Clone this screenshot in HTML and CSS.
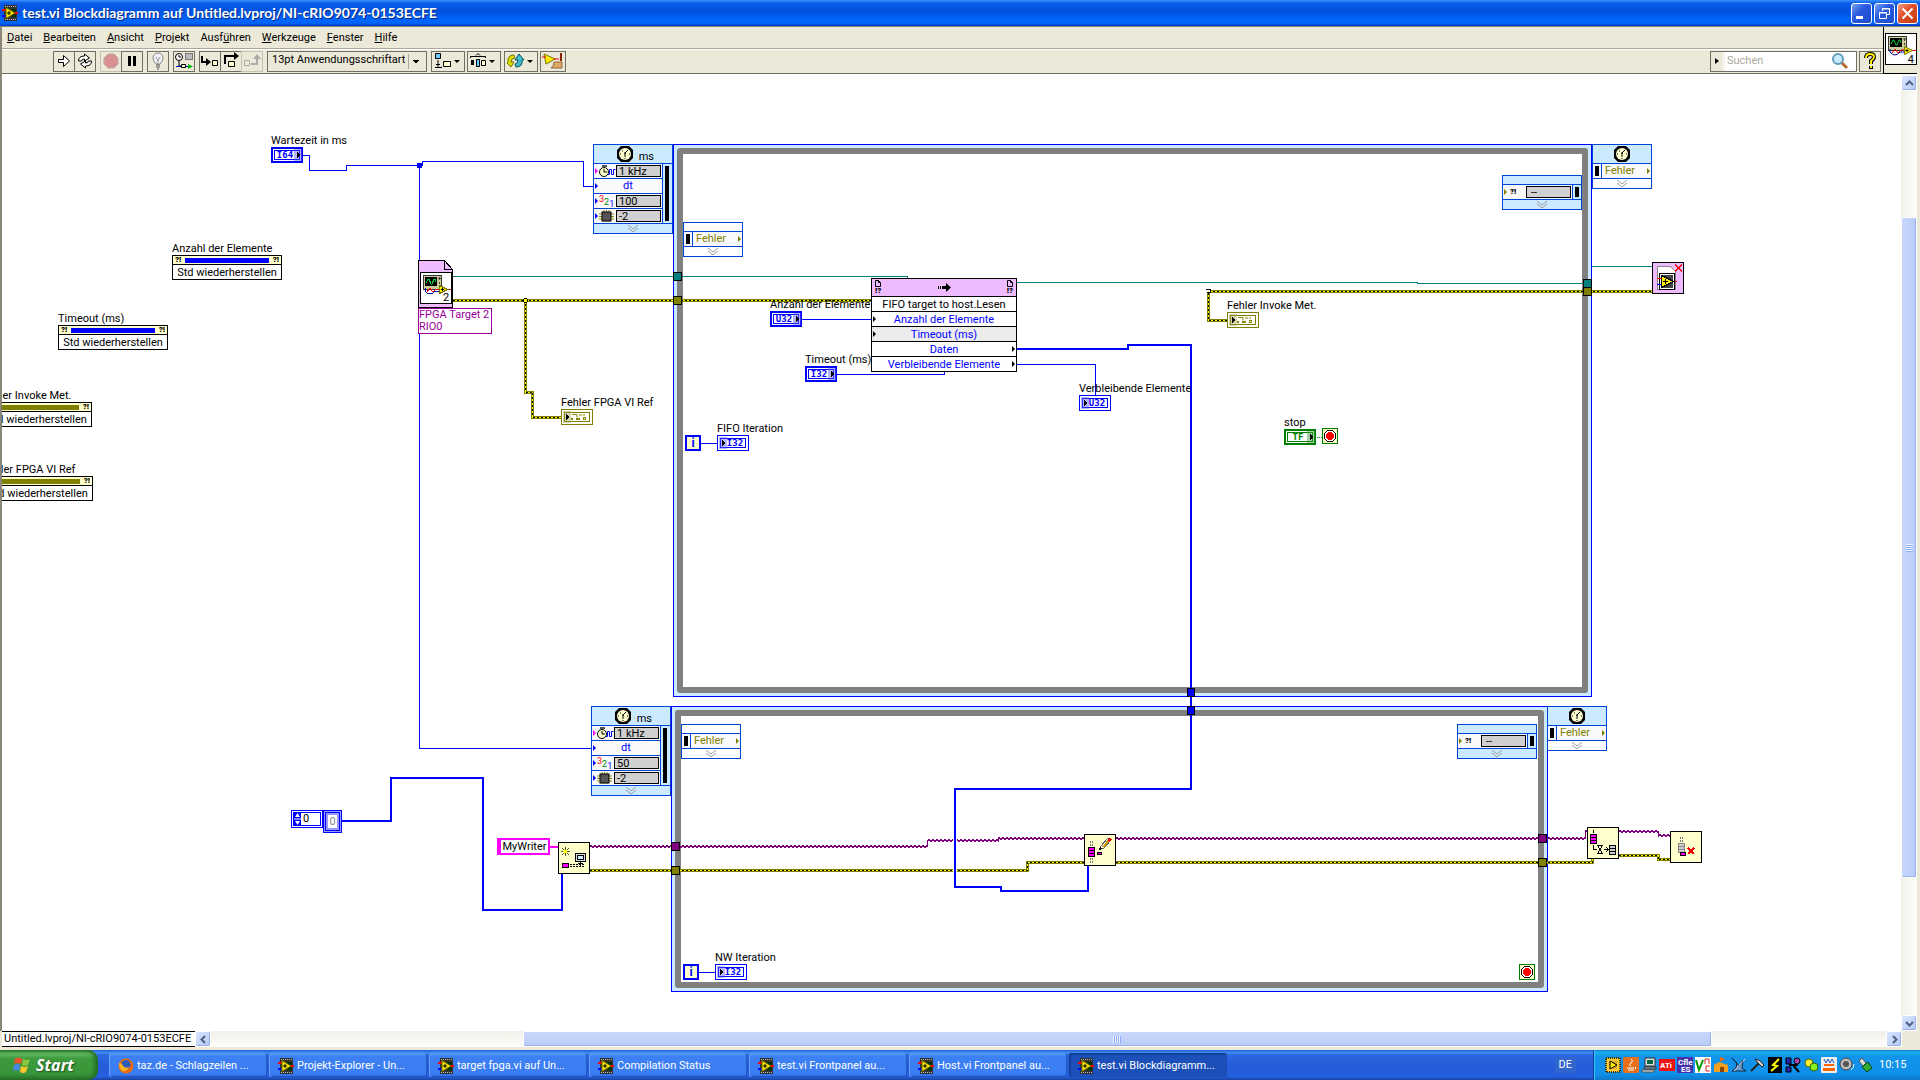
FILE: index.html
```
<!DOCTYPE html>
<html lang="de">

<head>
    <meta charset="UTF-8">
    <meta name="viewport" content="width=device-width, initial-scale=1.0">
    <title>test.vi Blockdiagramm</title>
    <link rel="stylesheet" href="styles.css">
</head>

<body>
    <!-- shared icons -->
    <svg class="defs" width="0" height="0">
        <symbol id="lv" viewBox="0 0 16 16">
            <rect x="2" y="0" width="13" height="16" fill="#333"/>
            <path d="M3 1.5h11M3 14.5h11" stroke="#bbb" stroke-dasharray="1 1"/>
            <rect x="9" y="4" width="5" height="8" fill="#063006"/>
            <path d="M0 5h4" stroke="#f00" stroke-width="2"/>
            <path d="M0 11h4" stroke="#00f" stroke-width="2"/>
            <path d="M12 8h4" stroke="#f00" stroke-width="2"/>
            <path d="M4 2.5l9 5.5-9 5.5z" fill="#fe0" stroke="#660" stroke-width="1"/>
            <path d="M5 8h4M7 6v4" stroke="#000"/>
        </symbol>
        <symbol id="vi" viewBox="0 0 32 32">
            <rect x=".5" y=".5" width="31" height="31" fill="#fff" stroke="#000"/>
            <rect x="3.5" y="3.5" width="18" height="14" fill="#cc9" stroke="#333"/>
            <rect x="5" y="5" width="12" height="9" fill="#000"/>
            <path d="M6 11l2-4h1l2 5h1l2-5h1l1 3" fill="none" stroke="#0c3"/>
            <path d="M19.500 5v3M19.500 10v2M18 6h3" stroke="#444"/>
            <path d="M5 16v3q5 6 10 0h5" fill="none" stroke="#00a"/>
            <path d="M7 20l3-4 3 4 3-3h4M27 17.500h4" fill="none" stroke="#e00"/>
            <path d="M19.500 13.500l8 4-8 4z" fill="#fe0" stroke="#770"/>
            <path d="M20.500 17.500h3M22 16v3" stroke="#000"/>
        </symbol>
        <symbol id="clock" viewBox="0 0 18 16">
            <path d="M5 0h8l4 4v8l-4 4H5l-4-4V4z" fill="#000"/>
            <circle cx="9" cy="8" r="6" fill="#ffffd0"/>
            <path d="M9 11V7l3-3M4 8h1M13 8h1M9 12v1M6 5h1M8 7h2" stroke="#000" fill="none"/>
        </symbol>
        <symbol id="source" viewBox="0 0 17 12">
            <path d="M3 0h5v2H3z" fill="#555"/>
            <circle cx="5" cy="7" r="4.500" fill="#ffc" stroke="#000"/>
            <path d="M5 4v3h3" stroke="#000" fill="none"/>
            <path d="M9 9.500h1.500v-5h2v5h2v-5h2" stroke="#00f" fill="none"/>
        </symbol>
        <symbol id="chip" viewBox="0 0 17 12">
            <path d="M0 4h15M0 6.500h15M0 9h15M5 0v12M7.500 0v12M10 0v12" stroke="#880"/>
            <rect x="3" y="2" width="9" height="9" fill="#555" stroke="#000"/>
        </symbol>
        <symbol id="chev" viewBox="0 0 10 8">
            <path d="M0 0l5 4 5-4M0 3l5 4 5-4" fill="none" stroke="#999"/>
        </symbol>
        <symbol id="error" viewBox="0 0 18 8">
            <path d="M2 1.500h5v3M9 2h3M14 1v2" fill="none" stroke="#880"/>
            <path d="M1 5h2v2H1zM6 5h4v2H6z" fill="#880"/>
            <rect x="13.500" y="4.500" width="2" height="2" fill="none" stroke="#880"/>
        </symbol>
        <symbol id="stopicon" viewBox="0 0 16 16">
            <rect x=".5" y=".5" width="15" height="15" fill="#ffffd0" stroke="#008000"/>
            <path d="M5.500 2.500h5l3 3v5l-3 3h-5l-3-3v-5z" fill="#fff" stroke="#000"/>
            <circle cx="8" cy="8" r="4" fill="#f00"/>
        </symbol>
        <symbol id="doc" viewBox="0 0 6 7">
            <path d="M.5 .5h3l2 2v4h-5zM3.500 .5v2h2" fill="none" stroke="#000"/>
        </symbol>
    </svg>

    <header class="titlebar">
        <svg class="i16"><use href="#lv"/></svg>
        <h1>test.vi Blockdiagramm auf Untitled.lvproj/NI-cRIO9074-0153ECFE</h1>
        <button type="button" class="win-btn" aria-label="Minimieren"><svg viewBox="0 0 19 19"><path d="M4 12h7v3H4z" fill="#fff"/></svg></button>
        <button type="button" class="win-btn" aria-label="Wiederherstellen"><svg viewBox="0 0 19 19"><path d="M7.500 7V4.500h7v6H12M7 5h8M4.500 8.500h7v6h-7zM4 9h8" fill="none" stroke="#fff"/></svg></button>
        <button type="button" class="win-btn close" aria-label="Schließen"><svg viewBox="0 0 19 19"><path d="M4.500 4.500l10 10M14.500 4.500l-10 10" stroke="#fff" stroke-width="2"/></svg></button>
    </header>

    <div class="top">
        <div class="bars">
            <nav class="menubar">
                <a href="#"><u>D</u>atei</a>
                <a href="#"><u>B</u>earbeiten</a>
                <a href="#"><u>A</u>nsicht</a>
                <a href="#"><u>P</u>rojekt</a>
                <a href="#">Ausf<u>ü</u>hren</a>
                <a href="#"><u>W</u>erkzeuge</a>
                <a href="#"><u>F</u>enster</a>
                <a href="#"><u>H</u>ilfe</a>
            </nav>
            <div class="toolbar">
                <div class="group">
                    <button type="button" class="tool" aria-label="Ausführen"><svg viewBox="0 0 20 18"><path d="M4.500 7.500h5v-4l6 5.500-6 5.500v-4h-5z" fill="#fff" stroke="#000"/></svg></button>
                    <button type="button" class="tool" aria-label="Wiederholt ausführen"><svg viewBox="0 0 20 18"><path d="M3.500 9q0-5 6-5V2l5 4-5 3V7q-3 0-3 2zM16.500 9q0 5-6 5v2l-5-4 5-3v2q3 0 3-2z" fill="#fff" stroke="#000"/></svg></button>
                </div>
                <div class="group">
                    <button type="button" class="tool off" aria-label="Abbrechen"><svg viewBox="0 0 20 18"><path d="M7 2h6l4 4v6l-4 4H7l-4-4V6z" fill="#d99090" stroke="#b9a9a0"/></svg></button>
                    <button type="button" class="tool" aria-label="Pause"><svg viewBox="0 0 20 18"><path d="M6 4h3v10H6zM11 4h3v10h-3z"/></svg></button>
                </div>
                <button type="button" class="tool" aria-label="Highlight-Funktion"><svg viewBox="0 0 20 18"><path d="M8 12q-3-3-3-6a5 5 0 0 1 10 0q0 3-3 6z" fill="#eef2f5" stroke="#8a8a8a"/><path d="M8 5l2 4 2-4M10 9v3" fill="none" stroke="#999"/><path d="M8 13h4M8 15h4M9 17h2" stroke="#555"/></svg></button>
                <button type="button" class="tool" aria-label="Werte beibehalten"><svg viewBox="0 0 20 18"><circle cx="5" cy="5" r="3.500" fill="#fff" stroke="#000"/><path d="M5 3v2h2M5 9v5h3" fill="none" stroke="#000"/><rect x="11.500" y="1.500" width="7" height="6" fill="#bbb" stroke="#777"/><path d="M2 14.500h15" stroke="#00c"/><path d="M14 12l5 2.500-5 2.500z" fill="#0b0"/><path d="M7.500 12.500h4v3h-4z" fill="#ffc" stroke="#000"/></svg></button>
                <div class="group">
                    <button type="button" class="tool" aria-label="Hineinspringen"><svg viewBox="0 0 20 18"><path d="M2 4v6h6" fill="none" stroke="#000" stroke-width="2"/><path d="M6 6l5 4-5 4z"/><path d="M12.500 8.500h5v5h-5z" fill="#ffc" stroke="#000"/></svg></button>
                    <button type="button" class="tool" aria-label="Überspringen"><svg viewBox="0 0 20 18"><path d="M4 12V4h11" fill="none" stroke="#000" stroke-width="2"/><path d="M13 0l5 4-5 4z"/><path d="M7.500 9.500h6v5h-6z" fill="#ffc" stroke="#000"/></svg></button>
                    <button type="button" class="tool off" aria-label="Herausspringen"><svg viewBox="0 0 20 18"><path d="M9 12h6V6" fill="none" stroke="#aaa" stroke-width="2"/><path d="M11 7l4-5 4 5z" fill="#aaa"/><path d="M2.500 8.500h5v5h-5z" fill="#eec" stroke="#aaa"/></svg></button>
                </div>
                <select class="font-select" aria-label="Schriftart">
                    <option>13pt Anwendungsschriftart</option>
                </select>
                <button type="button" class="tool wide" aria-label="Ausrichten"><svg viewBox="0 0 32 18"><path d="M3.500 1.500h5v5h-5z" fill="#6cf" stroke="#000"/><path d="M6 8v7M4 12.500h4M3 15.500h7" stroke="#000"/><path d="M11.500 9.500h7v5h-7z" fill="#ffc" stroke="#000"/><path d="M22 8h6l-3 3z"/></svg></button>
                <button type="button" class="tool wide" aria-label="Verteilen"><svg viewBox="0 0 32 18"><path d="M2.500 6V4.500h15V6M8 3.500l2-2 2 2" fill="none" stroke="#000"/><path d="M3 8h3v5H3z"/><path d="M8.500 7.500h3v7h-3z" fill="#6cf" stroke="#000"/><path d="M13.500 8.500h4v5h-4z" fill="#ffc" stroke="#000"/><path d="M21 8h6l-3 3z"/></svg></button>
                <button type="button" class="tool wide gap" aria-label="Neu ordnen"><svg viewBox="0 0 32 18"><path d="M9 3q-7 0-6 7l-1 1 4 4 3-5H6q0-4 4-4z" fill="#dd0" stroke="#770"/><path d="M11 15q7 0 6-7h2l-5-6-4 6h3q0 4-3 4z" fill="#4bc" stroke="#056"/><path d="M22 8h6l-3 3z"/></svg></button>
                <button type="button" class="tool mid" aria-label="Diagramm aufräumen"><svg viewBox="0 0 24 18"><path d="M3 2l11 5-9 5z" fill="#fe0" stroke="#770"/><path d="M1 5h4M13 7h5" stroke="#e00"/><path d="M20 1v8" stroke="#820" stroke-width="2"/><path d="M13 10h8v6H10q3-2 3-6z" fill="#da6" stroke="#964"/></svg></button>
                <div class="search">
                    <span class="search-drop"></span>
                    <input type="text" placeholder="Suchen" aria-label="Suchen">
                    <svg viewBox="0 0 18 18"><path d="M10 10l6 6" stroke="#b86a30" stroke-width="3"/><circle cx="7" cy="7" r="5" fill="#c8ecff" stroke="#69b" stroke-width="2"/></svg>
                </div>
                <button type="button" class="tool help" aria-label="Kontexthilfe"><svg viewBox="0 0 20 18"><path d="M6 6q0-4 4-4t4 3q0 2-3 4v3M11 14v3" fill="none" stroke="#000" stroke-width="4"/><path d="M6 6q0-4 4-4t4 3q0 2-3 4v3M11 14v2" fill="none" stroke="#fe0" stroke-width="2"/></svg></button>
            </div>
        </div>
        <div class="vi-pane">
            <svg class="i32"><use href="#vi"/></svg>
            <span class="vi-num">4</span>
        </div>
    </div>

    <main class="work">
        <div class="canvas">
            <div class="loop loop-fifo"></div>
            <div class="loop loop-nw"></div>

            <!-- wires, in window coordinates -->
            <svg class="wires" viewBox="2 74 1900 957" width="1900" height="957">
                <g class="w-int">
                    <path d="M303 155.500h6.500v15h37v-5h73M419.500 165.500h3v-4h161v25h10M419.500 165v583.500h172"/>
                    <path d="M802 319.500h69M837 374.500h107.500v-3M1017 364.500h78.500v31M701 443.500h16M699 972.500h16"/>
                </g>
                <circle cx="419.500" cy="165.500" r="3" fill="#00f"/>
                <g class="w-ref">
                    <path d="M453 276.500h454.500v2M1017 282.500h400.500v1H1583M1592 266.500h60"/>
                </g>
                <g class="w-str">
                    <path id="net" d="M590 846.500h337v-6h71v-2h86M1116 838.500h469v-7h2M1619 831.500h39v4h12"/>
                    <use class="w-up" href="#net" y="-1"/>
                    <use class="w-down" href="#net" y="1"/>
                </g>
                <path d="M550 846.500h8" stroke="#f0f" stroke-width="2" fill="none"/>
                <path class="e1" id="errs" d="M453 300.500h418M525.500 300v92h7v25h29M1227 320.500h-18.500v-29H1652M590 870.500h437.500v-8h57M1116 862.500h476v-4M1619 855.500h39v4h12"/>
                <path class="e2" d="M453 300.500h418M525.500 300v92h7v25h29M1227 320.500h-18.500v-29H1652M590 870.500h437.500v-8h57M1116 862.500h476v-4M1619 855.500h39v4h12"/>
                <path class="e3" d="M453 300.500h418M525.500 300v92h7v25h29M1227 320.500h-18.500v-29H1652M590 870.500h437.500v-8h57M1116 862.500h476v-4M1619 855.500h39v4h12"/>
                <circle cx="525.500" cy="300.500" r="2" fill="#ff0" stroke="#000"/>
                <path d="M1206 289.500h4.500v3h-4" fill="#fff" stroke="#000"/>
                <path d="M1317 437.500h5" stroke="#008000" stroke-dasharray="1 1"/>
                <!-- gap where the array wire crosses -->
                <path d="M955 835v40" stroke="#fff" stroke-width="4"/>
                <g class="w-arr">
                    <path d="M1017 349h111v-4h63v444H955v98h46v4h87v-25"/>
                    <path d="M342 821h49v-43h92v132h79v-37"/>
                </g>
                <!-- tunnels -->
                <g stroke="#000">
                    <rect x="673.500" y="272.500" width="8" height="8" fill="#008080"/>
                    <rect x="673.500" y="296.500" width="8" height="8" fill="#808000"/>
                    <rect x="1583.500" y="279.500" width="8" height="8" fill="#008080"/>
                    <rect x="1583.500" y="287.500" width="8" height="8" fill="#808000"/>
                    <rect x="671.500" y="842.500" width="8" height="8" fill="#800080"/>
                    <rect x="671.500" y="866.500" width="8" height="8" fill="#808000"/>
                    <rect x="1538.500" y="834.500" width="8" height="8" fill="#800080"/>
                    <rect x="1538.500" y="858.500" width="8" height="8" fill="#808000"/>
                    <rect x="1187.500" y="688.500" width="7" height="8" fill="#00f"/>
                    <rect x="1187.500" y="706.500" width="7" height="8" fill="#00f"/>
                </g>
                <!-- open FPGA reference -->
                <path d="M418.500 260.500h26l8 9v38h-34z" fill="#eebbff" stroke="#000"/>
                <path d="M444.500 260.500v9h8" fill="none" stroke="#000"/>
                <use href="#vi" x="420" y="272" width="32" height="32"/>
                <!-- close FPGA reference -->
                <g transform="translate(1652 262)">
                    <rect x=".5" y=".5" width="31" height="31" fill="#eebbff" stroke="#000"/>
                    <path d="M5.500 4.500h13l5 5v18h-18z" fill="#fff" stroke="#888"/>
                    <rect x="7.500" y="11.500" width="15" height="16" fill="#fff" stroke="#000"/>
                    <rect x="9" y="13" width="12" height="13" fill="#444"/>
                    <path d="M5 16.500h5M22 19.500h3" stroke="#f00"/><path d="M5 22.500h5" stroke="#00f"/>
                    <path d="M9.500 13.500l12 6-12 6z" fill="#fe0" stroke="#000"/>
                    <path d="M11 19.500h5M13.500 17v5" stroke="#000"/>
                    <path d="M23 3l7 6M30 3l-7 6" stroke="#f00" stroke-width="1.500"/>
                </g>
                <!-- create writer -->
                <g transform="translate(558 842)">
                    <rect x=".5" y=".5" width="31" height="31" fill="#ffffcc" stroke="#000"/>
                    <path d="M3 9.500h9M7.500 5v9M4 6l7 7M11 6l-7 7" stroke="#550"/><circle cx="7.500" cy="9.500" r="2" fill="#ff0"/>
                    <rect x="17.500" y="11.500" width="10" height="8" fill="#ddd" stroke="#000"/>
                    <rect x="19.500" y="13.500" width="6" height="4" fill="#cef" stroke="#000"/>
                    <path d="M22.500 20v4M20 21.500h5" stroke="#000"/>
                    <path d="M12 22.500h15M12 24.500h15" stroke="#000" stroke-dasharray="2 1"/>
                    <rect x="4.500" y="21.500" width="6" height="4" fill="#f0f" stroke="#000"/>
                </g>
                <!-- write -->
                <g transform="translate(1084 834)">
                    <rect x=".5" y=".5" width="31" height="31" fill="#ffffcc" stroke="#000"/>
                    <path d="M6.500 7v5M8.500 7v5M6.500 24v5M8.500 24v5" stroke="#777" stroke-dasharray="2 1"/>
                    <path d="M4.500 13.500h6v9h-6zM4.500 16.500h6M4.500 19.500h6M13.500 18.500h4v2h-4z" fill="#f0f" stroke="#000"/>
                    <path d="M16 15l1-3 7-8 3 2-7 8z" fill="#fff" stroke="#666"/>
                    <path d="M19 13l7-8" stroke="#c90" stroke-width="2"/>
                    <path d="M15 16l2-2" stroke="#000" stroke-width="2"/>
                    <path d="M25 5l2 2" stroke="#e00" stroke-width="3"/>
                </g>
                <!-- flush -->
                <g transform="translate(1587 827)">
                    <rect x=".5" y=".5" width="31" height="31" fill="#ffffcc" stroke="#000"/>
                    <path d="M6.500 3v3M6.500 18v4h3" fill="none" stroke="#000"/>
                    <path d="M3.500 7.500h6v9h-6zM3.500 10.500h6M3.500 13.500h6" fill="#f0f" stroke="#000"/>
                    <path d="M10 18.500h6M10 26.500h6M11 19l4 7M15 19l-4 7M17 22.500h4M19 20l2 2.500-2 2.500" fill="none" stroke="#000"/>
                    <path d="M22.500 18.500h6v9h-6zM22.500 21.500h6M22.500 24.500h6" fill="#ccc" stroke="#000"/>
                </g>
                <!-- destroy -->
                <g transform="translate(1670 831)">
                    <rect x=".5" y=".5" width="31" height="31" fill="#ffffcc" stroke="#000"/>
                    <path d="M10.500 6v5M12.500 6v5" stroke="#777" stroke-dasharray="2 1"/>
                    <path d="M8.500 12.500h6v9h-6zM8.500 15.500h6M8.500 18.500h6" fill="#ccc" stroke="#888"/>
                    <rect x="10.500" y="21.500" width="5" height="3" fill="#f0f" stroke="#000"/>
                    <path d="M18 17l6 6M24 17l-6 6" stroke="#e00" stroke-width="2"/>
                </g>
                <use href="#stopicon" x="1322" y="428" width="16" height="16"/>
                <use href="#stopicon" x="1519" y="964" width="16" height="16"/>
            </svg>

            <!-- property nodes -->
            <div class="node prop-anzahl"><span>Anzahl der Elemente</span>
                <div class="prop"><div class="prop-head"><b>?!</b><i></i><b>?!</b></div><p>Std wiederherstellen</p></div></div>
            <div class="node prop-timeout"><span>Timeout (ms)</span>
                <div class="prop"><div class="prop-head"><b>?!</b><i></i><b>?!</b></div><p>Std wiederherstellen</p></div></div>
            <div class="node prop-invoke"><span>Fehler Invoke Met.</span>
                <div class="prop olive"><div class="prop-head"><b>?!</b><i></i><b>?!</b></div><p>Std wiederherstellen</p></div></div>
            <div class="node prop-fpga"><span>Fehler FPGA VI Ref</span>
                <div class="prop olive"><div class="prop-head"><b>?!</b><i></i><b>?!</b></div><p>Std wiederherstellen</p></div></div>

            <!-- terminals -->
            <div class="node t-wartezeit"><span>Wartezeit in ms</span><div class="term ctl"><b>I64</b></div></div>
            <div class="node t-anzahl"><span>Anzahl der Elemente</span><div class="term ctl"><b>U32</b></div></div>
            <div class="node t-timeout"><span>Timeout (ms)</span><div class="term ctl"><b>I32</b></div></div>
            <div class="node t-rest"><span>Verbleibende Elemente</span><div class="term"><b>U32</b></div></div>
            <div class="node t-fifo"><span>FIFO Iteration</span><div class="term"><b>I32</b></div></div>
            <div class="node t-nw"><span>NW Iteration</span><div class="term"><b>I32</b></div></div>
            <div class="node t-stop"><span>stop</span><div class="term ctl bool"><b>TF</b></div></div>
            <div class="node t-invoke"><span>Fehler Invoke Met.</span><div class="term err"><b><svg viewBox="0 0 18 8"><use href="#error"/></svg></b></div></div>
            <div class="node t-fpga"><span>Fehler FPGA VI Ref</span><div class="term err"><b><svg viewBox="0 0 18 8"><use href="#error"/></svg></b></div></div>
            <div class="iter iter-fifo">i</div>
            <div class="iter iter-nw">i</div>

            <div class="fpga-num">2</div>
            <div class="fpga-label">FPGA Target 2<br>RIO0</div>

            <!-- constants -->
            <div class="string-const">MyWriter</div>
            <div class="array-const">
                <div class="array-index"><svg viewBox="0 0 7 14"><path d="M0 0h7v14H0z" fill="#00f"/><path d="M1 5l2.500-4L6 5zM1 9l2.500 4L6 9zM0 6.500h7v1H0z" fill="#fff"/></svg>0</div>
                <div class="array-elem"><span>0</span></div>
            </div>

            <!-- invoke node -->
            <div class="invoke">
                <div class="invoke-head">
                    <div><svg class="doc"><use href="#doc"/></svg><b>!?</b></div>
                    <svg class="arrow" viewBox="0 0 13 9"><path d="M0 3h1v3H0zM2 3h1v3H2zM4 3h4V0l5 4.500L8 9V6H4z"/></svg>
                    <div><svg class="doc"><use href="#doc"/></svg><b>!?</b></div>
                </div>
                <div class="row name">FIFO target to host.Lesen</div>
                <div class="row in">Anzahl der Elemente</div>
                <div class="row in opt">Timeout (ms)</div>
                <div class="row out">Daten</div>
                <div class="row out">Verbleibende Elemente</div>
            </div>

            <!-- timed loop input nodes -->
            <div class="timed timed-fifo">
                <div class="timed-head"><svg class="clock"><use href="#clock"/></svg><span>ms</span></div>
                <div class="timed-body">
                    <div class="timed-rows">
                        <div class="trow src"><svg><use href="#source"/></svg><span class="val">1 kHz</span></div>
                        <div class="trow dt">dt</div>
                        <div class="trow"><em><i>3</i><i>2</i><i>1</i></em><span class="val">100</span></div>
                        <div class="trow"><svg><use href="#chip"/></svg><span class="val">-2</span></div>
                    </div>
                    <div class="bar"></div>
                </div>
                <div class="foot"><svg><use href="#chev"/></svg></div>
            </div>
            <div class="timed timed-nw">
                <div class="timed-head"><svg class="clock"><use href="#clock"/></svg><span>ms</span></div>
                <div class="timed-body">
                    <div class="timed-rows">
                        <div class="trow src"><svg><use href="#source"/></svg><span class="val">1 kHz</span></div>
                        <div class="trow dt">dt</div>
                        <div class="trow"><em><i>3</i><i>2</i><i>1</i></em><span class="val">50</span></div>
                        <div class="trow"><svg><use href="#chip"/></svg><span class="val">-2</span></div>
                    </div>
                    <div class="bar"></div>
                </div>
                <div class="foot"><svg><use href="#chev"/></svg></div>
            </div>

            <!-- Fehler nodes -->
            <div class="fehler f-left-fifo"><div class="f-head"></div><div class="f-row"><i></i><span>Fehler</span></div><div class="foot"><svg><use href="#chev"/></svg></div></div>
            <div class="fehler f-left-nw"><div class="f-head"></div><div class="f-row"><i></i><span>Fehler</span></div><div class="foot"><svg><use href="#chev"/></svg></div></div>
            <div class="fehler big f-out-fifo"><div class="f-head"><svg class="clock"><use href="#clock"/></svg></div><div class="f-row"><i></i><span>Fehler</span></div><div class="foot"><svg><use href="#chev"/></svg></div></div>
            <div class="fehler big f-out-nw"><div class="f-head"><svg class="clock"><use href="#clock"/></svg></div><div class="f-row"><i></i><span>Fehler</span></div><div class="foot"><svg><use href="#chev"/></svg></div></div>
            <div class="fehler next n-fifo"><div class="f-head"></div><div class="f-row"><b>?!</b><span class="val">--</span><i></i></div><div class="foot"><svg><use href="#chev"/></svg></div></div>
            <div class="fehler next n-nw"><div class="f-head"></div><div class="f-row"><b>?!</b><span class="val">--</span><i></i></div><div class="foot"><svg><use href="#chev"/></svg></div></div>
        </div>
        <div class="vscroll">
            <button type="button" class="sb-btn" aria-label="Nach oben"><svg viewBox="0 0 9 9"><path d="M1 6l3.500-3.500L8 6" fill="none" stroke="#4d6185" stroke-width="2"/></svg></button>
            <div class="v-before"></div>
            <div class="v-thumb"></div>
            <div class="v-after"></div>
            <button type="button" class="sb-btn" aria-label="Nach unten"><svg viewBox="0 0 9 9"><path d="M1 3l3.500 3.500L8 3" fill="none" stroke="#4d6185" stroke-width="2"/></svg></button>
        </div>
    </main>

    <div class="bottom">
        <div class="path">Untitled.lvproj/NI-cRIO9074-0153ECFE</div>
        <div class="hscroll">
            <button type="button" class="sb-btn" aria-label="Nach links"><svg viewBox="0 0 9 9"><path d="M6 1L2.500 4.500 6 8" fill="none" stroke="#4d6185" stroke-width="2"/></svg></button>
            <div class="h-before"></div>
            <div class="h-thumb"></div>
            <div class="h-after"></div>
            <button type="button" class="sb-btn" aria-label="Nach rechts"><svg viewBox="0 0 9 9"><path d="M3 1l3.500 3.500L3 8" fill="none" stroke="#4d6185" stroke-width="2"/></svg></button>
        </div>
    </div>

    <footer class="taskbar">
        <button type="button" class="start">
            <svg viewBox="0 0 20 20"><path d="M3 4q4-3 7 0L9 9Q5 7 2 9z" fill="#f0522a"/><path d="M11 4q4 2 7 0l-2 6q-3 2-6 0z" fill="#8cc63e"/><path d="M2 10q3-2 6 0l-1 6q-3-2-6 0z" fill="#4a86e8"/><path d="M9 11q4 2 7 0l-2 6q-3 2-6 0z" fill="#fbc52b"/></svg>
            Start
        </button>
        <div class="tasks">
            <button type="button" class="task"><svg class="i16" viewBox="0 0 16 16"><circle cx="8" cy="8" r="7.500" fill="#e66a10"/><circle cx="8" cy="6.500" r="4.500" fill="#2a5cb8"/><path d="M1 5q3 0 4 3 3 3 6 1-2 5-7 4-3-3-3-8z" fill="#ffb020"/></svg>taz.de - Schlagzeilen ...</button>
            <button type="button" class="task"><svg class="i16"><use href="#lv"/></svg>Projekt-Explorer - Un...</button>
            <button type="button" class="task"><svg class="i16"><use href="#lv"/></svg>target fpga.vi auf Un...</button>
            <button type="button" class="task"><svg class="i16"><use href="#lv"/></svg>Compilation Status</button>
            <button type="button" class="task"><svg class="i16"><use href="#lv"/></svg>test.vi Frontpanel au...</button>
            <button type="button" class="task"><svg class="i16"><use href="#lv"/></svg>Host.vi Frontpanel au...</button>
            <button type="button" class="task active"><svg class="i16"><use href="#lv"/></svg>test.vi Blockdiagramm...</button>
        </div>
        <span class="lang">DE</span>
        <div class="tray">
            <svg viewBox="0 0 16 16"><rect x="1" y="1" width="14" height="14" fill="#fc3" stroke="#430" stroke-width="2" stroke-dasharray="1 1"/><path d="M4 4h8v8H4z" fill="#da2"/><path d="M5 4l7 4-7 4z" fill="#fe0" stroke="#000"/></svg>
            <svg viewBox="0 0 16 16"><rect width="16" height="16" rx="2" fill="#e8701a"/><path d="M8 2q3 2 0 4t0 3M4 11h7M5 13h6M12 10q2 1 0 2" fill="none" stroke="#fff"/></svg>
            <svg viewBox="0 0 16 16"><path d="M4 1h10v8H4z" fill="#ddd" stroke="#333"/><path d="M6 3h6v4H6z" fill="#064"/><path d="M3 10h12v2H3z" fill="#aaa" stroke="#333"/><path d="M1 13h12v2H1z" fill="#eee" stroke="#555"/></svg>
            <svg viewBox="0 0 16 16"><rect y="2" width="16" height="12" fill="#e11"/><text x="1" y="11">ATi</text></svg>
            <svg viewBox="0 0 16 16"><rect width="16" height="16" fill="#43a"/><text x="1" y="8">Cfle</text><text x="4" y="15">ES</text></svg>
            <svg viewBox="0 0 16 16"><rect width="16" height="16" fill="#fff"/><path d="M1 3l3 10 4-10" fill="none" stroke="#090" stroke-width="2"/><path d="M10 7V2h4v5M15 9h-4v5h4" fill="none" stroke="#d22"/></svg>
            <svg viewBox="0 0 16 16"><path d="M1 15V8l5-3 9 3v7z" fill="#f3a020"/><path d="M7 5V0l5 2-4 2" fill="#f60"/><path d="M7 10h4v5H7z" fill="#840"/></svg>
            <svg viewBox="0 0 16 16"><path d="M1 1l5 5-1 5-4 3h14l-4-3 1-8-4 6z" fill="#69c" stroke="#124"/><path d="M3 14L14 2" stroke="#ddd"/></svg>
            <svg viewBox="0 0 16 16"><path d="M2 14l8-8" stroke="#222" stroke-width="2"/><path d="M6 2q5 0 9 6l-2 2-5-5z" fill="#ccc" stroke="#222"/></svg>
            <svg viewBox="0 0 16 16"><rect x="1" width="14" height="16" fill="#000"/><path d="M12 2L6 8l4 1-6 5" fill="none" stroke="#ff0" stroke-width="2"/></svg>
            <svg viewBox="0 0 16 16"><path d="M1 1h5v6H1zM1 10h5v5H1z" fill="#22a" stroke="#000"/><circle cx="12" cy="4" r="3" fill="#a4a" stroke="#000"/><path d="M4 8h9M8 8l6 7" stroke="#000" stroke-width="2"/></svg>
            <svg viewBox="0 0 16 16"><circle cx="6" cy="6" r="4" fill="#fe3" stroke="#560"/><circle cx="11" cy="10" r="4" fill="#8e2" stroke="#360"/></svg>
            <svg viewBox="0 0 16 16"><rect width="16" height="16" rx="1" fill="#eee"/><path d="M3 2l2 4 2-4 2 4 2-4 2 4" fill="none" stroke="#25b"/><path d="M3 8h10" stroke="#f60" stroke-width="2"/><path d="M2 11h12v3H2z" fill="#f60"/></svg>
            <svg viewBox="0 0 16 16"><circle cx="7" cy="7" r="6" fill="#bbb" stroke="#444"/><circle cx="7" cy="7" r="3" fill="#555"/><path d="M12 13q3-2 3-6" fill="none" stroke="#eee"/></svg>
            <svg viewBox="0 0 16 16"><path d="M2 4l3-3 4 5-3 3z" fill="#ddd" stroke="#555"/><path d="M5 10l6-5 4 6-5 4z" fill="#3a3" stroke="#041"/></svg>
            <time>10:15</time>
        </div>
    </footer>
</body>

</html>
```
FILE: styles.css
```
*,
*::before,
*::after {
    margin: 0;
    padding: 0;
    box-sizing: border-box;
}

body {
    display: flex;
    flex-direction: column;
    height: 100vh;
    overflow: hidden;
    background-color: #ece9d8;
    color: #000;
    font-family: Roboto, "Liberation Sans", sans-serif;
    font-size: 11px;
    line-height: 14px;
}

button,
input,
select {
    font: inherit;
    color: inherit;
}

button {
    display: flex;
    align-items: center;
    justify-content: center;
    border: none;
    background: none;
}

i,
em {
    font-style: normal;
}

.defs {
    position: absolute;
}

.i16 {
    width: 16px;
    height: 16px;
    flex: none;
}

.i32 {
    width: 32px;
    height: 32px;
}

/* title bar */
.titlebar {
    display: flex;
    align-items: center;
    gap: 2px;
    height: 26px;
    padding: 0 2px;
    background: linear-gradient(#3a93ff, #0a5be8 12%, #0053e0 45%, #0066ff 80%, #0062f5 90%, #0038c0);
}

.titlebar h1 {
    flex: 1;
    padding-left: 2px;
    color: #fff;
    font-family: Lato, sans-serif;
    font-size: 14px;
    font-weight: 700;
    text-shadow: 1px 1px #0a2a80;
}

.win-btn {
    width: 21px;
    height: 21px;
    border: 1px solid #fff;
    border-radius: 3px;
    background: linear-gradient(135deg, #7ba2f0, #2a5be0 40%, #1c4bc8);
}

.win-btn svg {
    width: 19px;
    height: 19px;
}

.win-btn.close {
    background: linear-gradient(135deg, #f0a088, #e0512c 40%, #c03c14);
}

/* menu and tool bars */
.top {
    display: flex;
    height: 48px;
    padding-right: 3px;
    border-top: 1px solid #8a8778;
    border-left: 2px solid #8a8778;
}

.bars {
    flex: 1;
    border-bottom: 1px solid #716f64;
}

.menubar {
    display: flex;
    align-items: center;
    gap: 11px;
    height: 22px;
    padding-left: 5px;
    border-bottom: 1px solid #aca899;
}

.menubar a {
    color: #000;
    text-decoration: none;
}

.toolbar {
    display: flex;
    align-items: center;
    gap: 4px;
    height: 24px;
    padding: 0 2px 1px 51px;
    border-top: 1px solid #fff;
}

.group {
    display: flex;
}

.tool {
    width: 22px;
    height: 21px;
    border: 1px solid #716f64;
}

.group .tool + .tool {
    margin-left: -1px;
}

.tool svg {
    width: 20px;
    height: 18px;
}

.tool.off {
    border-color: #c5c2b2;
}

.tool.wide {
    width: 34px;
    margin-right: -2px;
}

.tool.wide svg {
    width: 32px;
}

.tool.gap {
    margin-left: 1px;
}

.tool.mid {
    width: 26px;
}

.tool.mid svg {
    width: 24px;
}

.font-select {
    width: 160px;
    height: 21px;
    padding: 0 0 2px 4px;
    border: 1px solid #716f64;
    border-radius: 0;
    appearance: none;
    /* drop arrow in two halves, then the divider */
    background: linear-gradient(to bottom left, #000 50%, transparent 0) right 10px top 8px / 3px 4px no-repeat, linear-gradient(to bottom right, #000 50%, transparent 0) right 7px top 8px / 3px 4px no-repeat, linear-gradient(#aca899, #aca899) right 17px top 2px / 1px 15px no-repeat, #ece9d8;
}

.search {
    display: flex;
    align-items: center;
    width: 147px;
    height: 21px;
    margin-left: auto;
    margin-right: -2px;
    padding-right: 7px;
    border: 1px solid #716f64;
    background-color: #fff;
}

.search-drop {
    width: 14px;
    height: 19px;
    background-color: #ece9d8;
    border-right: 3px solid #f4f2ea;
}

.search-drop::after {
    content: "";
    display: block;
    width: 4px;
    margin: 6px 4px;
    border: 3px solid transparent;
    border-left: 4px solid #000;
    border-right: 0;
}

.search input {
    flex: 1;
    min-width: 0;
    padding-left: 2px;
    border: none;
    outline: none;
    background: none;
}

.search input::placeholder {
    color: #aca899;
}

.search svg {
    width: 18px;
    height: 18px;
}

.vi-pane {
    position: relative;
    width: 34px;
    padding: 6px 0 0 1px;
    border-left: 1px solid #000;
    border-bottom: 1px solid #000;
}

/* digit drawn over the VI icon */
.vi-num {
    position: absolute;
    right: 3px;
    bottom: 6px;
}

/* diagram */
.work {
    display: flex;
    flex: 1;
    min-height: 0;
    padding-right: 3px;
    border-left: 2px solid #8a8778;
}

.canvas {
    position: relative;
    flex: 1;
    overflow: hidden;
    background-color: #fff;
}

.canvas > * {
    position: absolute;
}

.wires {
    left: 0;
    top: 0;
    shape-rendering: crispEdges;
}

.w-int,
.w-arr,
.w-ref,
.w-str {
    fill: none;
    stroke: #00f;
}

.w-arr {
    stroke-width: 2;
}

.w-ref {
    stroke: #008080;
}

.w-str {
    stroke: #800080;
}

.w-up,
.w-down {
    stroke-dasharray: 2 2;
}

.w-down {
    stroke-dashoffset: 2;
}

.e1,
.e2,
.e3 {
    fill: none;
    stroke: #808000;
    stroke-width: 3;
}

.e2 {
    stroke: #ff0;
    stroke-width: 1;
}

.e3 {
    stroke: #000;
    stroke-width: 1;
    stroke-dasharray: 2 2;
}

.loop {
    border: 1px solid #00f;
    background: #cceaff;
    padding: 3px;
}

.loop::before {
    content: "";
    display: block;
    height: 100%;
    border: 6px solid #808080;
    border-radius: 3px;
    background-color: #fff;
}

.loop-fifo {
    left: 671px;
    top: 70px;
    width: 919px;
    height: 553px;
}

.loop-nw {
    left: 669px;
    top: 632px;
    width: 877px;
    height: 286px;
}

.node {
    white-space: nowrap;
}

.node > span {
    display: block;
    height: 14px;
    line-height: 16px;
}

.prop {
    width: 110px;
    border: 1px solid #000;
    background-color: #fff;
    text-align: center;
}

.prop p {
    height: 14px;
    line-height: 16px;
}

.prop-head {
    display: flex;
    align-items: center;
    justify-content: space-between;
    height: 9px;
    padding: 0 2px;
    border-bottom: 1px solid #000;
    background-color: #ffffcc;
    font-size: 8px;
    line-height: 8px;
}

.prop-head b,
.invoke-head b,
.next b {
    font-weight: 900;
}

.prop-head i {
    width: 84px;
    height: 5px;
    background-color: #00f;
}

.prop.olive i {
    background-color: #808000;
}

.prop-anzahl { left: 170px; top: 167px; }
.prop-timeout { left: 56px; top: 237px; }
.prop-invoke { left: -20px; top: 314px; }
.prop-fpga { left: -19px; top: 388px; }

.term {
    position: relative;
    width: 32px;
    height: 16px;
    padding: 2px;
    border: 1px solid #00f;
    background-color: #fff;
    color: #00f;
}

.term b {
    display: flex;
    justify-content: center;
    height: 10px;
    padding-left: 4px;
    border: 1px solid;
    font-family: "DejaVu Sans Mono", monospace;
    font-size: 9px;
    line-height: 8px;
}

.term.ctl {
    padding: 1px;
    border-width: 2px;
}

.term.ctl b {
    padding: 0 4px 0 0;
}

.term b svg {
    width: 18px;
    height: 8px;
}

/* data flow arrow on top of the terminal frame */
.term::after {
    content: "";
    position: absolute;
    top: 1px;
    left: 1px;
    width: 8px;
    height: 12px;
    background: linear-gradient(to top right, #000 50%, transparent 0) 3px 3px / 4px 3px no-repeat, linear-gradient(to bottom right, #000 50%, transparent 0) 3px 6px / 4px 3px no-repeat;
    background-color: rgba(90, 90, 255, 0.45);
}

.term.ctl::after {
    top: 0;
    left: auto;
    right: -1px;
}

.term.bool {
    border-color: #008000;
    color: #008000;
}

.term.bool::after {
    background-color: rgba(60, 150, 60, 0.45);
}

.term.err {
    border-color: #808000;
    color: #808000;
}

.term.err::after {
    background-color: rgba(150, 150, 60, 0.4);
}

.t-wartezeit { left: 269px; top: 59px; }
.t-anzahl { left: 768px; top: 223px; }
.t-timeout { left: 803px; top: 278px; }
.t-rest { left: 1077px; top: 307px; }
.t-fifo { left: 715px; top: 347px; }
.t-nw { left: 713px; top: 876px; }
.t-stop { left: 1282px; top: 341px; }
.t-invoke { left: 1225px; top: 224px; }
.t-fpga { left: 559px; top: 321px; }

.iter {
    width: 16px;
    height: 16px;
    border: 2px solid #00f;
    background-color: #ffffcc;
    color: #00f;
    font-size: 12px;
    font-weight: 700;
    line-height: 12px;
    text-align: center;
}

.iter-fifo { left: 683px; top: 361px; }
.iter-nw { left: 681px; top: 890px; }

.fpga-num {
    left: 441px;
    top: 217px;
}

.fpga-label {
    left: 416px;
    top: 234px;
    width: 74px;
    border: 1px solid #990099;
    background-color: #fff;
    color: #990099;
    line-height: 12px;
    white-space: nowrap;
}

.string-const {
    left: 495px;
    top: 764px;
    width: 53px;
    border: 2px solid #f0f;
    border-left-width: 4px;
    background-color: #fff;
    line-height: 13px;
    text-align: center;
}

.array-const {
    display: flex;
    align-items: flex-start;
    left: 289px;
    top: 736px;
}

.array-index {
    display: flex;
    align-items: center;
    gap: 2px;
    width: 32px;
    height: 18px;
    border: 3px double #00f;
    background-color: #fff;
}

.array-index svg {
    width: 7px;
    height: 14px;
    flex: none;
}

.array-elem {
    width: 19px;
    height: 23px;
    padding: 2px;
    border: 3px double #00f;
    background-color: #9999ff;
    color: #888;
}

.array-elem span {
    display: block;
    background-color: #fff;
    text-align: center;
    line-height: 13px;
}

.invoke {
    left: 869px;
    top: 204px;
    width: 146px;
    border: 1px solid #000;
    background-color: #fff;
    color: #00f;
    text-align: center;
}

.invoke-head {
    display: flex;
    align-items: center;
    justify-content: space-between;
    height: 17px;
    padding: 0 3px;
    background-color: #eebbff;
    color: #000;
}

.invoke-head b {
    display: block;
    font-size: 8px;
    line-height: 8px;
}

.doc {
    display: block;
    width: 6px;
    height: 7px;
}

.arrow {
    width: 13px;
    height: 9px;
}

.row {
    position: relative;
    height: 15px;
    border-top: 1px solid #000;
    line-height: 16px;
}

.row.name {
    color: #000;
}

.row.opt {
    background-color: #ececec;
}

.row.in::before,
.row.out::before,
.trow::before {
    content: "";
    position: absolute;
    top: 4px;
    left: 1px;
    border: 3px solid transparent;
    border-left-color: #000;
    border-right: 0;
}

.row.out::before {
    left: auto;
    right: 1px;
}

/* timed loop nodes */
.timed,
.fehler {
    border: 1px solid #0046d5;
    background-color: #cceaff;
}

.timed {
    width: 80px;
}

.timed-head {
    display: flex;
    justify-content: flex-end;
    gap: 5px;
    height: 18px;
    padding-right: 18px;
}

.timed-head span {
    padding-top: 5px;
    line-height: 13px;
}

.clock {
    width: 18px;
    height: 16px;
    margin-top: 1px;
}

.timed-body {
    display: flex;
}

.timed-rows {
    flex: 1;
    border-right: 1px solid #0046d5;
}

.trow {
    position: relative;
    display: flex;
    align-items: center;
    justify-content: space-between;
    height: 15px;
    padding: 0 1px 0 5px;
    border-top: 1px solid #0046d5;
    background-color: #fafafa;
}

.trow::before {
    border-left-color: #00f;
}

.trow.src::before {
    border-left-color: #f0f;
}

.trow.dt {
    justify-content: center;
    padding-right: 5px;
    color: #00f;
}

.trow svg {
    width: 17px;
    height: 12px;
}

.trow em {
    display: flex;
    font-size: 9px;
    line-height: 8px;
}

.trow em i:nth-child(1) { color: #f00; }
.trow em i:nth-child(2) { color: #080; padding-top: 3px; }
.trow em i:nth-child(3) { color: #00f; padding-top: 5px; }

.val {
    width: 45px;
    height: 12px;
    padding-left: 2px;
    border: 1px solid #000;
    background-color: #d0d0d0;
    line-height: 11px;
}

.bar {
    width: 9px;
    border-top: 1px solid #0046d5;
    padding: 2px;
}

.bar::before {
    content: "";
    display: block;
    height: 55px;
    width: 4px;
    background-color: #000;
}

.foot {
    display: flex;
    justify-content: center;
    height: 10px;
    padding-top: 1px;
    border-top: 1px solid #0046d5;
}

.foot svg {
    width: 10px;
    height: 8px;
}

.timed-fifo { left: 591px; top: 70px; }
.timed-nw { left: 589px; top: 632px; }

.fehler {
    width: 60px;
    background-color: #fff;
}

.f-head {
    height: 8px;
    text-align: center;
}

.fehler.big .f-head {
    height: 18px;
    background-color: #cceaff;
}

.f-row {
    position: relative;
    display: flex;
    align-items: center;
    height: 15px;
    border-top: 1px solid #0046d5;
    background-color: #fafafa;
    color: #808000;
}

.f-row i {
    align-self: stretch;
    width: 8px;
    background: linear-gradient(#000, #000) center / 4px 10px no-repeat;
}

.f-row span:not(.val) {
    flex: 1;
    padding-left: 3px;
    border-left: 1px solid #0046d5;
}

/* olive arrow */
.f-row::after {
    content: "";
    position: absolute;
    top: 4px;
    right: 1px;
    border: 3px solid transparent;
    border-left-color: #808000;
    border-right: 0;
}

.fehler.next {
    width: 80px;
    background-color: #cceaff;
}

.next .f-row {
    justify-content: flex-end;
    color: #000;
}

.next .f-row::after {
    right: auto;
    left: 1px;
}

.next b {
    flex: 1;
    padding-left: 7px;
    font-size: 8px;
}

.next .val {
    margin-right: 1px;
    padding-left: 4px;
}

.next .f-row i {
    width: 9px;
    border-left: 1px solid #0046d5;
    background-color: #cceaff;
}

.f-left-fifo { left: 681px; top: 148px; }
.f-left-nw { left: 679px; top: 650px; }
.f-out-fifo { left: 1590px; top: 70px; }
.f-out-nw { left: 1545px; top: 632px; }
.n-fifo { left: 1500px; top: 101px; }
.n-nw { left: 1455px; top: 650px; }

/* scroll bars */
.vscroll {
    display: flex;
    flex-direction: column;
    width: 16px;
    padding-top: 1px;
    background: linear-gradient(to right, #f0efe8, #fefefb);
}

.hscroll {
    display: flex;
    flex: 1;
    background: linear-gradient(#f0efe8, #fefefb);
}

.sb-btn {
    flex: none;
    width: 16px;
    height: 16px;
    border: 1px solid #fff;
    border-radius: 2px;
    background: linear-gradient(135deg, #dbe5ff, #b4c8f6);
    box-shadow: inset -1px -1px #98b1e4;
}

.sb-btn svg {
    width: 9px;
    height: 9px;
}

.v-thumb,
.h-thumb {
    display: flex;
    align-items: center;
    justify-content: center;
    border: 1px solid #fff;
    border-radius: 2px;
    background: linear-gradient(to right, #c9d7fc, #b9cbf8);
    box-shadow: inset -1px -1px #98b1e4;
}

.h-thumb {
    background: linear-gradient(#c9d7fc, #b9cbf8);
}

.v-before { flex: 126; }
.v-thumb { flex: 662; }
.v-after { flex: 137; }
.h-before { flex: 312; }
.h-thumb { flex: 1188; }
.h-after { flex: 174; }

.h-thumb::before,
.v-thumb::before {
    content: "";
    width: 8px;
    height: 7px;
    background: repeating-linear-gradient(to right, #eef4fe 0 1px, #8cb0f8 1px 2px);
}

.v-thumb::before {
    width: 7px;
    height: 8px;
    background: repeating-linear-gradient(#eef4fe 0 1px, #8cb0f8 1px 2px);
}

.bottom {
    display: flex;
    height: 19px;
    padding: 0 18px 3px 2px;
}

.path {
    width: 193px;
    padding-left: 2px;
    border-top: 1px solid #000;
    border-bottom: 1px solid #000;
    background-color: #fff;
    white-space: nowrap;
    overflow: hidden;
}

/* task bar */
.taskbar {
    display: flex;
    align-items: stretch;
    height: 30px;
    background: linear-gradient(#1f5ad4, #3f8cf0 8%, #2c66e0 18%, #245bd8 60%, #2460e0 88%, #1a43a0);
    color: #fff;
}

.start {
    width: 98px;
    gap: 4px;
    padding-right: 12px;
    border-radius: 0 10px 10px 0;
    background: linear-gradient(#2f7a2f, #62b562 12%, #3c9a3c 30%, #38963a 80%, #2a702a);
    box-shadow: inset -3px 0 4px #1e6a1e;
    font-family: "Open Sans", sans-serif;
    font-size: 16px;
    font-style: italic;
    font-weight: 700;
    text-shadow: 1px 1px 2px #1a4a1a;
}

.start svg {
    width: 20px;
    height: 20px;
}

.tasks {
    display: flex;
    flex: 1;
    gap: 2px;
    padding: 3px 0 3px 11px;
}

.task {
    justify-content: flex-start;
    gap: 3px;
    width: 158px;
    padding-top: 1px;
    padding-left: 9px;
    border-radius: 3px;
    background: linear-gradient(#5a9cff, #3c80f4 15%, #3b7df2 85%, #2f68d8);
    box-shadow: inset 1px 0 #6aa4ff, inset -1px -1px #2458c0;
    white-space: nowrap;
}

.task.active {
    background: #1c4fb8;
    box-shadow: inset 1px 1px 2px #0e3480;
}

.lang {
    align-self: center;
    margin-right: 17px;
    padding: 1px 4px;
    background-color: #3166cc;
}

.tray {
    display: flex;
    align-items: center;
    gap: 2px;
    width: 327px;
    padding-left: 11px;
    border-left: 1px solid #0a3c9a;
    background: linear-gradient(#0f80d0, #1cb0f4 8%, #1294ea 20%, #0f90ea 80%, #0d78c8);
    box-shadow: inset 1px 0 #38c4fa;
}

.tray svg {
    width: 16px;
    height: 16px;
    flex: none;
}

.tray text {
    fill: #fff;
    font-size: 8px;
    font-weight: 700;
}

.tray time {
    margin-left: 4px;
}
```
